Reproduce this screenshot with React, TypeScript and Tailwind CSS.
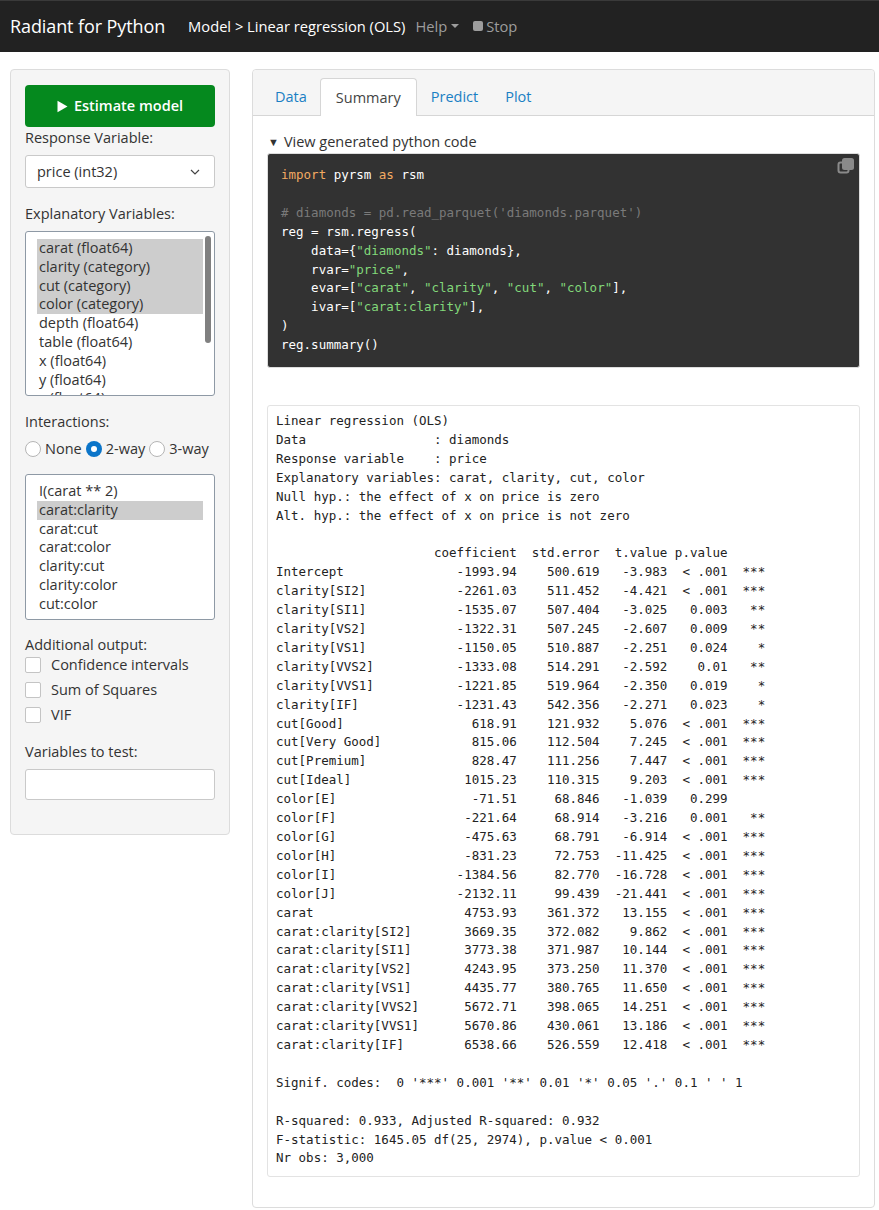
import React from "react";

const mono = "font-['DejaVu_Sans_Mono','Liberation_Mono',monospace]";

const rows: [string, string, string, string, string, string][] = [
  ["Intercept", "-1993.94", "500.619", "-3.983", "< .001", "***"],
  ["clarity[SI2]", "-2261.03", "511.452", "-4.421", "< .001", "***"],
  ["clarity[SI1]", "-1535.07", "507.404", "-3.025", "0.003", "**"],
  ["clarity[VS2]", "-1322.31", "507.245", "-2.607", "0.009", "**"],
  ["clarity[VS1]", "-1150.05", "510.887", "-2.251", "0.024", "*"],
  ["clarity[VVS2]", "-1333.08", "514.291", "-2.592", "0.01", "**"],
  ["clarity[VVS1]", "-1221.85", "519.964", "-2.350", "0.019", "*"],
  ["clarity[IF]", "-1231.43", "542.356", "-2.271", "0.023", "*"],
  ["cut[Good]", "618.91", "121.932", "5.076", "< .001", "***"],
  ["cut[Very Good]", "815.06", "112.504", "7.245", "< .001", "***"],
  ["cut[Premium]", "828.47", "111.256", "7.447", "< .001", "***"],
  ["cut[Ideal]", "1015.23", "110.315", "9.203", "< .001", "***"],
  ["color[E]", "-71.51", "68.846", "-1.039", "0.299", ""],
  ["color[F]", "-221.64", "68.914", "-3.216", "0.001", "**"],
  ["color[G]", "-475.63", "68.791", "-6.914", "< .001", "***"],
  ["color[H]", "-831.23", "72.753", "-11.425", "< .001", "***"],
  ["color[I]", "-1384.56", "82.770", "-16.728", "< .001", "***"],
  ["color[J]", "-2132.11", "99.439", "-21.441", "< .001", "***"],
  ["carat", "4753.93", "361.372", "13.155", "< .001", "***"],
  ["carat:clarity[SI2]", "3669.35", "372.082", "9.862", "< .001", "***"],
  ["carat:clarity[SI1]", "3773.38", "371.987", "10.144", "< .001", "***"],
  ["carat:clarity[VS2]", "4243.95", "373.250", "11.370", "< .001", "***"],
  ["carat:clarity[VS1]", "4435.77", "380.765", "11.650", "< .001", "***"],
  ["carat:clarity[VVS2]", "5672.71", "398.065", "14.251", "< .001", "***"],
  ["carat:clarity[VVS1]", "5670.86", "430.061", "13.186", "< .001", "***"],
  ["carat:clarity[IF]", "6538.66", "526.559", "12.418", "< .001", "***"],
];

const tableText = [
  "Linear regression (OLS)",
  "Data                 : diamonds",
  "Response variable    : price",
  "Explanatory variables: carat, clarity, cut, color",
  "Null hyp.: the effect of x on price is zero",
  "Alt. hyp.: the effect of x on price is not zero",
  "",
  " ".repeat(19) + "  coefficient  std.error  t.value p.value",
  ...rows.map(
    ([a, b, c, d, e, f]) =>
      a.padEnd(19) +
      "  " +
      b.padStart(11) +
      "  " +
      c.padStart(9) +
      "  " +
      d.padStart(7) +
      " " +
      e.padStart(7) +
      "  " +
      f.padStart(3)
  ),
  "",
  "Signif. codes:  0 '***' 0.001 '**' 0.01 '*' 0.05 '.' 0.1 ' ' 1",
  "",
  "R-squared: 0.933, Adjusted R-squared: 0.932",
  "F-statistic: 1645.05 df(25, 2974), p.value < 0.001",
  "Nr obs: 3,000",
].join("\n");

function Radio({ checked, label }: { checked?: boolean; label: string }) {
  return (
    <span className="flex items-center">
      {checked ? (
        <span className="w-[16px] h-[16px] rounded-full bg-[#0b75c9] flex items-center justify-center">
          <span className="w-[6px] h-[6px] rounded-full bg-white" />
        </span>
      ) : (
        <span className="w-[16px] h-[16px] rounded-full bg-white border border-[#b5b5b5]" />
      )}
      <span className="ml-[4px]">{label}</span>
    </span>
  );
}

function Check({ label }: { label: string }) {
  return (
    <div className="flex items-center h-[25px]">
      <span className="w-[16px] h-[16px] bg-white border border-[#c4c4c4] rounded-[2px]" />
      <span className="ml-[10px]">{label}</span>
    </div>
  );
}

export default function App() {
  const S = ({ children }: { children: React.ReactNode }) => (
    <span className="text-[#82d87a]">{children}</span>
  );
  const K = ({ children }: { children: React.ReactNode }) => (
    <span className="text-[#f2ab63]">{children}</span>
  );
  return (
    <div className="w-[879px] min-h-[1210px] bg-white font-['Open_Sans','Noto_Sans',sans-serif] text-[#333] text-[14.5px]">
      {/* Navbar */}
      <div className="h-[52px] bg-[#222222] border-t border-[#3a3a3a] flex items-center pl-[10px]">
        <span className="text-white text-[18px] tracking-[-0.1px]">Radiant for Python</span>
        <span className="text-white text-[14.7px] ml-[23px]">Model &gt; Linear regression (OLS)</span>
        <span className="text-[#9d9d9d] text-[14.7px] ml-[10px] flex items-center">
          Help
          <svg width="8" height="5" viewBox="0 0 8 5" className="ml-[4px]">
            <path d="M0 0 L8 0 L4 4 Z" fill="#9d9d9d" />
          </svg>
        </span>
        <span className="text-[#9d9d9d] text-[14.7px] ml-[14px] flex items-center">
          <span className="w-[10px] h-[10px] bg-[#9d9d9d] rounded-[2px] mr-[3px]" />
          Stop
        </span>
      </div>

      <div className="flex items-start pl-[10px] pr-[4px] pt-[17px] gap-[22px]">
        {/* Sidebar */}
        <div className="w-[220px] shrink-0 bg-[#f5f5f5] border border-[#dcdcdc] rounded-[4px] px-[14px] pt-[15px] pb-[34px]">
          <button className="w-full h-[42px] bg-[#05891e] rounded-[4px] text-white font-semibold text-[14.5px] flex items-center justify-center">
            <svg width="11" height="13" viewBox="0 0 11 13" className="mr-[6px]">
              <path d="M0.5 0.8 L10.5 6.5 L0.5 12.2 Z" fill="white" />
            </svg>
            Estimate model
          </button>
          <div className="mt-[1px] leading-[20px]">Response Variable:</div>
          <div className="mt-[7px] h-[33px] bg-white border border-[#c9c9c9] rounded-[3px] flex items-center justify-between pl-[11px] pr-[14px]">
            <span>price (int32)</span>
            <svg width="10" height="6" viewBox="0 0 10 6">
              <path d="M1 1 L5 5 L9 1" stroke="#444" strokeWidth="1.2" fill="none" />
            </svg>
          </div>

          <div className="mt-[16px] leading-[20px]">Explanatory Variables:</div>
          <div className="mt-[7px] h-[165px] bg-white border border-[#8e99a5] rounded-[3px] relative overflow-hidden pt-[7px] pl-[11px] pr-[11px]">
            {[
              ["carat (float64)", true],
              ["clarity (category)", true],
              ["cut (category)", true],
              ["color (category)", true],
              ["depth (float64)", false],
              ["table (float64)", false],
              ["x (float64)", false],
              ["y (float64)", false],
              ["z (float64)", false],
            ].map(([t, s]) => (
              <div
                key={t as string}
                className={`h-[18.8px] leading-[18.8px] pl-[2px] ${s ? "bg-[#cdcdcd]" : ""}`}
              >
                {t}
              </div>
            ))}
            <div className="absolute right-[3px] top-[4px] w-[6px] h-[107px] rounded-full bg-[#808080]" />
          </div>

          <div className="mt-[16px] leading-[20px]">Interactions:</div>
          <div className="mt-[7px] flex items-center gap-[4px] h-[20px]">
            <Radio label="None" />
            <Radio checked label="2-way" />
            <Radio label="3-way" />
          </div>
          <div className="mt-[15px] h-[146px] bg-white border border-[#8e99a5] rounded-[3px] pt-[7px] pl-[11px] pr-[11px]">
            {[
              ["I(carat ** 2)", false],
              ["carat:clarity", true],
              ["carat:cut", false],
              ["carat:color", false],
              ["clarity:cut", false],
              ["clarity:color", false],
              ["cut:color", false],
            ].map(([t, s]) => (
              <div
                key={t as string}
                className={`h-[18.8px] leading-[18.8px] pl-[2px] ${s ? "bg-[#cdcdcd]" : ""}`}
              >
                {t}
              </div>
            ))}
          </div>

          <div className="mt-[15px] leading-[20px]">Additional output:</div>
          <div className="-mt-[3px]">
            <Check label="Confidence intervals" />
            <Check label="Sum of Squares" />
            <Check label="VIF" />
          </div>
          <div className="mt-[15px] leading-[20px]">Variables to test:</div>
          <div className="mt-[7px] h-[31px] bg-white border border-[#c9c9c9] rounded-[3px]" />
        </div>

        {/* Main panel */}
        <div className="flex-1 border border-[#dcdcdc] rounded-[4px] min-h-[1136px] bg-white">
          <div className="bg-[#f5f5f5] h-[46px] border-b border-[#d6d6d6] flex items-end pl-[9px] rounded-t-[4px]">
            <div className="h-[37px] px-[13px] flex items-center text-[#1a7fc4]">Data</div>
            <div className="h-[38px] px-[15px] flex items-center bg-white border border-[#d6d6d6] border-b-0 rounded-t-[4px] -mb-[1px] text-[#444]">
              Summary
            </div>
            <div className="h-[37px] px-[14px] flex items-center text-[#1a7fc4]">Predict</div>
            <div className="h-[37px] px-[13px] flex items-center text-[#1a7fc4]">Plot</div>
          </div>
          <div className="px-[14px] pt-[16px] pb-[30px]">
            <div className="flex items-center leading-[20px] ml-[1px]">
              <span className="text-[11px] mr-[5px]">▼</span>
              View generated python code
            </div>
            <div className={`relative mt-[1px] bg-[#323232] rounded-[3px] border border-[#dddddd] pl-[13px] pt-[12px] pb-[12px] text-[12.5px] leading-[18.9px] text-white ${mono} whitespace-pre`}>
              <div>
                <K>import</K> pyrsm <K>as</K> rsm
              </div>
              <div> </div>
              <div className="text-[#7a7a7a]"># diamonds = pd.read_parquet('diamonds.parquet')</div>
              <div>reg = rsm.regress(</div>
              <div>
                {"    data={"}
                <S>"diamonds"</S>
                {": diamonds},"}
              </div>
              <div>
                {"    rvar="}
                <S>"price"</S>,
              </div>
              <div>
                {"    evar=["}
                <S>"carat"</S>, <S>"clarity"</S>, <S>"cut"</S>, <S>"color"</S>
                {"],"}
              </div>
              <div>
                {"    ivar=["}
                <S>"carat:clarity"</S>
                {"],"}
              </div>
              <div>)</div>
              <div>reg.summary()</div>
              <svg width="18" height="18" viewBox="0 0 18 18" className="absolute right-[4px] top-[3px]">
                <rect x="1.5" y="5.5" width="10" height="10" rx="2" fill="none" stroke="#8a8a8a" strokeWidth="2" />
                <rect x="5" y="1" width="12" height="12" rx="2.5" fill="#8a8a8a" />
              </svg>
            </div>
            <pre className={`mt-[37px] border border-[#e3e3e3] rounded-[3px] pl-[8px] pt-[6px] pb-[8px] text-[12.5px] leading-[18.9px] text-[#222] ${mono} whitespace-pre`}>
              {tableText}
            </pre>
          </div>
        </div>
      </div>
    </div>
  );
}
